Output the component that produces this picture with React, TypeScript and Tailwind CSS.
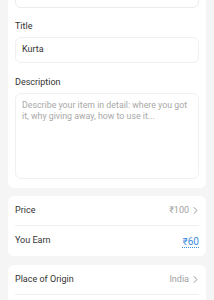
import React from "react";

const Chevron = () => (
  <svg width="7" height="9" viewBox="0 0 7 9" fill="none" className="ml-[3px]">
    <path d="M2 1.5 L5 4.5 L2 7.5" stroke="#9a9a9a" strokeWidth="1" strokeLinecap="round" strokeLinejoin="round" />
  </svg>
);

const lines = ["Describe your item in detail: where you got", "it, why giving away, how to use it..."];

export default function App() {
  return (
    <div className="min-h-[300px] overflow-hidden bg-[#f5f5f5] px-2 text-[#333] [font-family:Roboto,'Noto_Sans',sans-serif]">
      <div className="rounded-b-[6px] bg-white px-[7px] pb-[9px]">
        <div className="mt-[-18px] h-[26px] rounded-[6px] border border-[#ececec] bg-white" />
        <div className="mt-[12px] h-[12px] text-[9px] leading-[12px] text-[#333]">Title</div>
        <div className="mt-[5px] flex h-[26px] items-center rounded-[6px] border border-[#f0f0f0] px-[6px] text-[9px] text-[#333]">
          Kurta
        </div>
        <div className="mt-[13px] h-[12px] text-[9px] leading-[12px] text-[#333]">Description</div>
        <div className="mt-[5px] flex h-[86px] flex-col overflow-hidden rounded-[6px] border border-[#f0f0f0] px-[6px] pt-[6px] text-[8.8px] leading-[11px] text-[#a8a8a8]">
          {lines.map((l) => (
            <div key={l} className="whitespace-nowrap">
              {l}
            </div>
          ))}
        </div>
      </div>

      <div className="mt-[8px] rounded-[6px] bg-white px-[7px]">
        <div className="flex h-[30px] items-center justify-between border-b border-[#f0f0f0] text-[9px]">
          <span className="text-[#333]">Price</span>
          <span className="flex items-center text-[#a0a0a0]">
            ₹100
            <Chevron />
          </span>
        </div>
        <div className="flex h-[30px] items-center justify-between text-[9px]">
          <span className="text-[#333]">You Earn</span>
          <span className="text-[10px] text-[#3b8de0] underline decoration-dotted decoration-[#3b8de0] underline-offset-2">
            ₹60
          </span>
        </div>
      </div>

      <div className="mt-[9px] rounded-t-[6px] bg-white px-[7px]">
        <div className="flex h-[30px] items-center justify-between border-b border-[#f0f0f0] text-[9px]">
          <span className="text-[#333]">Place of Origin</span>
          <span className="flex items-center text-[#a0a0a0]">
            India
            <Chevron />
          </span>
        </div>
        <div className="h-[30px]" />
      </div>
    </div>
  );
}
